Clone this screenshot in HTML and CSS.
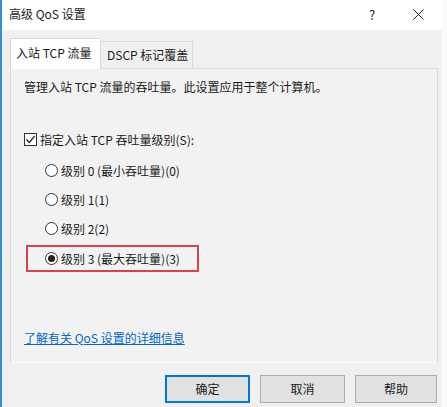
FILE: index.html
```html
<!DOCTYPE html>
<html lang="zh-CN">
<head>
  <meta charset="UTF-8" />
  <title>高级 QoS 设置</title>
  <link rel="stylesheet" href="styles.css">
</head>
<body>
  <div class="window">
    <div class="titlebar">
      <span class="title">高级 QoS 设置</span>
      <span class="help-btn">?</span>
      <span class="close-btn">
        <svg width="11" height="11" viewBox="0 0 11 11">
          <path d="M0.5 0.5 L10.5 10.5 M10.5 0.5 L0.5 10.5" stroke="#222" stroke-width="1" fill="none"/>
        </svg>
      </span>
    </div>

    <div class="content">
      <div class="tabs">
        <div class="tab active">入站 TCP 流量</div>
        <div class="tab">DSCP 标记覆盖</div>
      </div>

      <div class="panel">
        <p class="desc">管理入站 TCP 流量的吞吐量。此设置应用于整个计算机。</p>

        <div class="check-row">
          <span class="checkbox">
            <svg width="11" height="11" viewBox="0 0 11 11">
              <path d="M1.5 5.5 L4.3 8.5 L9.8 1.8" stroke="#222" stroke-width="1.3" fill="none"/>
            </svg>
          </span>
          <span>指定入站 TCP 吞吐量级别(S):</span>
        </div>

        <div class="radio-group">
          <div class="radio-row"><span class="radio"></span>级别 0 (最小吞吐量)(0)</div>
          <div class="radio-row"><span class="radio"></span>级别 1(1)</div>
          <div class="radio-row"><span class="radio"></span>级别 2(2)</div>
          <div class="radio-row highlight"><span class="radio checked"></span>级别 3 (最大吞吐量)(3)</div>
        </div>

        <a class="more-link" href="#">了解有关 QoS 设置的详细信息</a>
      </div>

      <div class="buttons">
        <div class="btn btn-default">确定</div>
        <div class="btn">取消</div>
        <div class="btn">帮助</div>
      </div>
    </div>
  </div>
</body>
</html>
```

FILE: styles.css
```css
* {
  box-sizing: border-box;
  margin: 0;
  padding: 0;
}

body {
  width: 447px;
  height: 407px;
  overflow: hidden;
  background: #fafafa;
  font-family: "Noto Sans CJK SC", "Noto Sans", sans-serif;
  font-size: 12px;
  color: #1a1a1a;
}

.window {
  width: 442px;
  height: 407px;
  background: #f0f0f0;
  border-left: 2px solid #3a8bd0;
}

.titlebar {
  height: 30px;
  background: #ffffff;
  display: flex;
  align-items: center;
  padding-left: 7px;
}

.title {
  flex: 1;
  line-height: 16px;
  margin-top: -2px;
}

.help-btn {
  width: 46px;
  text-align: center;
  font-size: 13px;
  margin-top: -2px;
}

.close-btn {
  width: 46px;
  display: flex;
  justify-content: center;
  margin-right: 1px;
  margin-top: -2px;
}

.content {
  padding: 8px 0 0 8px;
}

.tabs {
  display: flex;
  align-items: flex-end;
  height: 31px;
  margin-bottom: -1px;
  position: relative;
  z-index: 1;
}

.tab {
  width: 93px;
  height: 27px;
  line-height: 25px;
  padding-left: 6px;
  background: #f0f0f0;
  border: 1px solid #d9d9d9;
  border-bottom: none;
  margin-bottom: 1px;
}

.tab.active {
  width: 90px;
  height: 31px;
  line-height: 27px;
  padding-left: 5px;
  background: #ffffff;
  border-right: none;
  margin-bottom: 0;
}

.panel {
  width: 428px;
  height: 295px;
  background: #f2f2f2;
  border: 1px solid #d9d9d9;
  border-bottom-color: #ffffff;
  padding: 10px 13px 0;
  display: flex;
  flex-direction: column;
}

.desc {
  line-height: 16px;
}

.check-row {
  display: flex;
  align-items: center;
  height: 16px;
  margin-top: 36px;
}

.checkbox {
  width: 13px;
  height: 13px;
  border: 1px solid #333;
  background: #ffffff;
  display: flex;
  align-items: center;
  justify-content: center;
  margin-right: 3px;
}

.radio-group {
  margin-top: 9px;
}

.radio-row {
  display: flex;
  align-items: center;
  height: 29px;
  padding-left: 21px;
}

.radio {
  width: 13px;
  height: 13px;
  border: 1px solid #333;
  border-radius: 50%;
  background: #ffffff;
  margin-right: 3px;
  display: flex;
  align-items: center;
  justify-content: center;
}

.radio.checked::after {
  content: '';
  width: 7px;
  height: 7px;
  border-radius: 50%;
  background: #222;
}

.radio-row.highlight {
  width: 173px;
  height: 27px;
  margin: 2px 0 0 2px;
  padding-left: 17px;
  border: 2px solid #d8434a;
}

.more-link {
  margin-top: 58px;
  line-height: 16px;
  color: #0066cc;
  text-decoration: underline;
  align-self: flex-start;
}

.buttons {
  display: flex;
  justify-content: flex-end;
  gap: 10px;
  margin-top: 12px;
  width: 428px;
}

.btn {
  width: 85px;
  height: 28px;
  line-height: 26px;
  text-align: center;
  background: #e1e1e1;
  border: 1px solid #adadad;
}

.btn-default {
  border: 2px solid #0078d7;
  line-height: 24px;
}

.btn:last-child {
  width: 82px;
  margin-right: 1px;
}
```
